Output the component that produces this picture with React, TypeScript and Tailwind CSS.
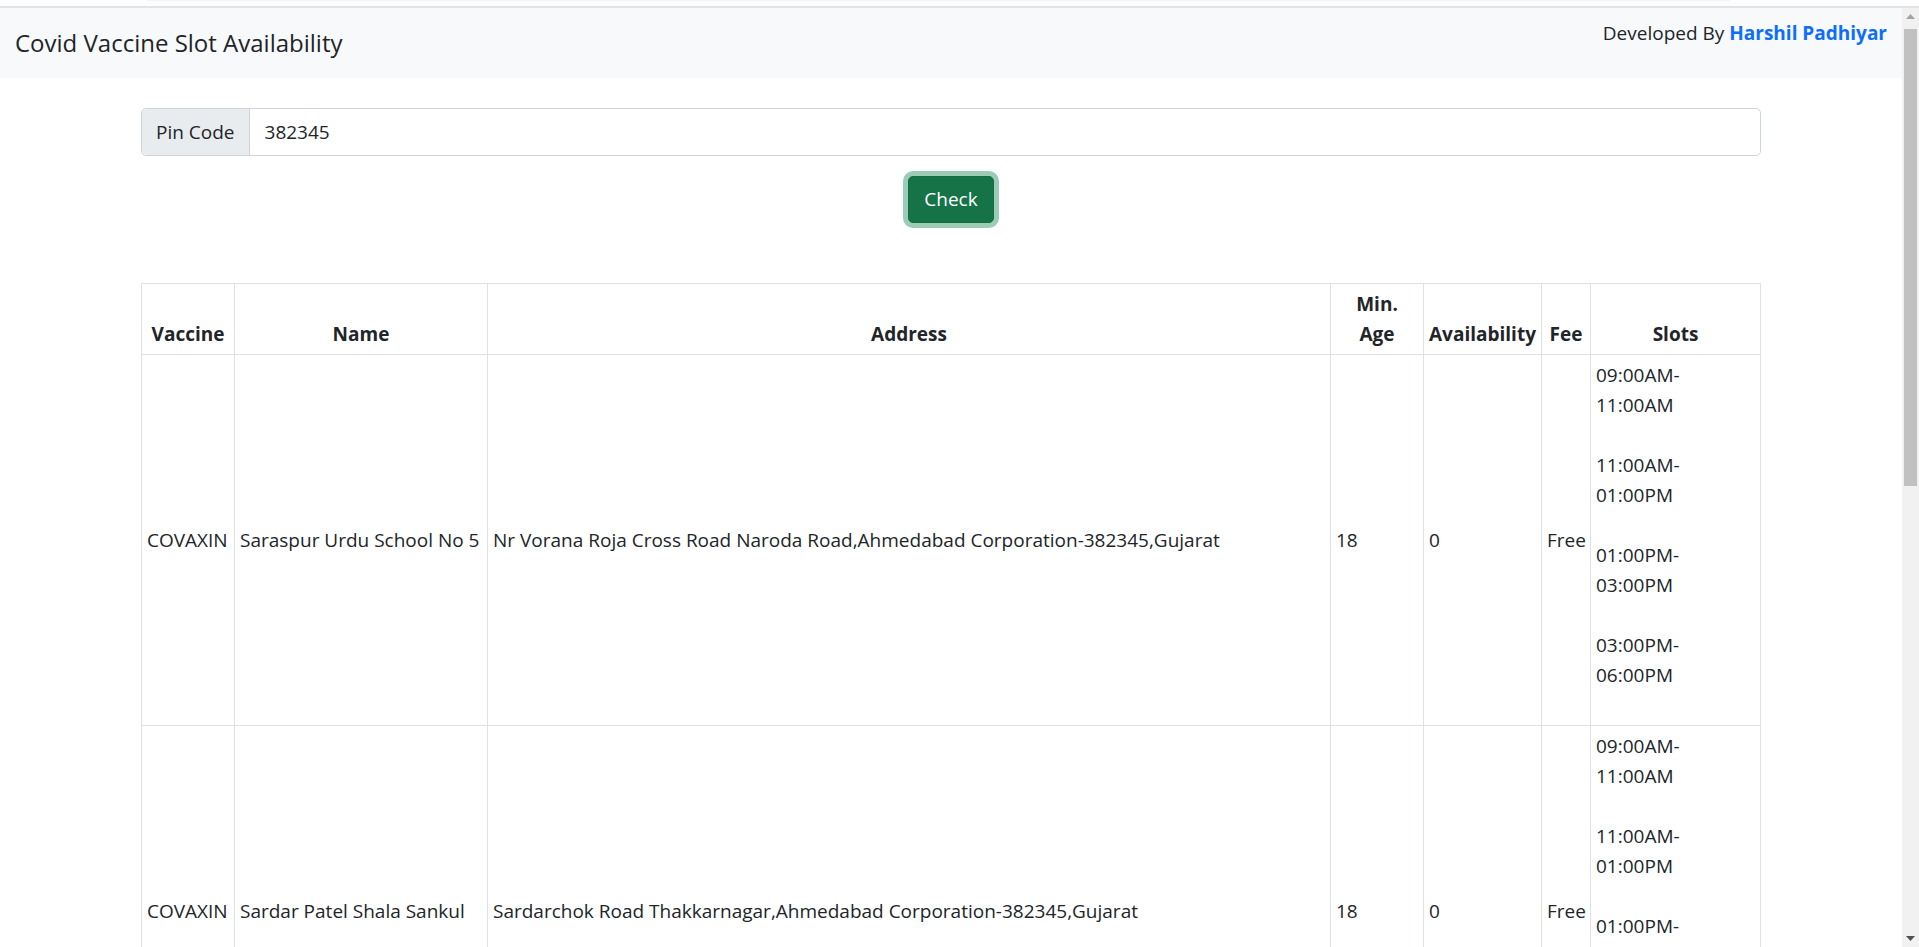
import React from "react";

type Center = {
  vaccine: string;
  name: string;
  address: string;
  minAge: number;
  available: number;
  fee: string;
  slots: [string, string][];
};

const slots: [string, string][] = [
  ["09:00AM-", "11:00AM"],
  ["11:00AM-", "01:00PM"],
  ["01:00PM-", "03:00PM"],
  ["03:00PM-", "06:00PM"],
];

const centers: Center[] = [
  {
    vaccine: "COVAXIN",
    name: "Saraspur Urdu School No 5",
    address: "Nr Vorana Roja Cross Road Naroda Road,Ahmedabad Corporation-382345,Gujarat",
    minAge: 18,
    available: 0,
    fee: "Free",
    slots,
  },
  {
    vaccine: "COVAXIN",
    name: "Sardar Patel Shala Sankul",
    address: "Sardarchok Road Thakkarnagar,Ahmedabad Corporation-382345,Gujarat",
    minAge: 18,
    available: 0,
    fee: "Free",
    slots,
  },
  {
    vaccine: "COVISHIELD",
    name: "Saraspur UHC",
    address: "Saraspur Road Near Vorana Pol,Ahmedabad Corporation-382345,Gujarat",
    minAge: 45,
    available: 0,
    fee: "Free",
    slots,
  },
  {
    vaccine: "COVISHIELD",
    name: "Thakkarbapanagar UHC",
    address: "Thakkarbapanagar Char Rasta,Ahmedabad Corporation-382345,Gujarat",
    minAge: 45,
    available: 0,
    fee: "Free",
    slots,
  },
];

const th = "border border-[#dee2e6] px-[5px] py-[5px] align-bottom text-center font-bold";
const td = "border border-[#dee2e6] px-[5px] py-[5px] align-middle text-left";

function Scrollbar() {
  return (
    <div className="sticky top-0 flex h-[939px] w-[17px] shrink-0 flex-col bg-[#f1f1f1]">
      <div className="flex h-[17px] items-center justify-center">
        <svg width="9" height="5" viewBox="0 0 9 5">
          <path d="M0 5 L4.5 0 L9 5 Z" fill="#a3a3a3" />
        </svg>
      </div>
      <div className="mx-[2px] mt-[4px] h-[457px] bg-[#c1c1c1]" />
      <div className="flex-1" />
      <div className="flex h-[17px] items-center justify-center">
        <svg width="9" height="5" viewBox="0 0 9 5">
          <path d="M0 0 L9 0 L4.5 5 Z" fill="#505050" />
        </svg>
      </div>
    </div>
  );
}

export default function App() {
  return (
    <div className="h-[947px] overflow-hidden bg-white font-['Open_Sans',sans-serif] text-[19px] leading-[30px] text-[#212529]">
      {/* top strip */}
      <div className="h-[8px]">
        <div className="ml-[147px] h-px w-[1583px] bg-[#f2f2f2]" />
        <div className="mt-[5px] h-[2px] bg-[#e2e3e5]" />
      </div>

      <div className="flex">
        <div className="min-w-0 flex-1">
          <nav className="flex h-[70px] items-center justify-between bg-[#f8f9fa] px-[15px]">
            <span className="text-[24px] leading-[37.5px]">Covid Vaccine Slot Availability</span>
            <p className="mb-[20px]">
              Developed By <a className="font-bold text-[#0d6efd]">Harshil Padhiyar</a>
            </p>
          </nav>

          <main className="mx-auto w-[1620px] pb-[40px]">
            <div className="mt-[30px] flex h-[47.5px] rounded-[5px] border border-[#ced4da]">
              <span className="flex items-center rounded-l-[5px] border-r border-[#ced4da] bg-[#e9ecef] px-[14px]">
                Pin Code
              </span>
              <input
                defaultValue="382345"
                className="flex-1 rounded-r-[5px] bg-white px-[15px] outline-none"
              />
            </div>

            <div className="mt-[20px] flex justify-center">
              <button className="h-[47.5px] rounded-[5px] border border-[#146c43] bg-[#157347] px-[15px] text-white shadow-[0_0_0_5px_rgba(60,153,110,0.5)]">
                Check
              </button>
            </div>

            <table className="mt-[60px] w-full table-fixed border-collapse border border-[#dee2e6]">
              <colgroup>
                <col className="w-[93px]" />
                <col className="w-[253px]" />
                <col />
                <col className="w-[93px]" />
                <col className="w-[118px]" />
                <col className="w-[49px]" />
                <col className="w-[170px]" />
              </colgroup>
              <thead>
                <tr>
                  <th className={th}>Vaccine</th>
                  <th className={th}>Name</th>
                  <th className={th}>Address</th>
                  <th className={th}>
                    Min.
                    <br />
                    Age
                  </th>
                  <th className={`${th} whitespace-nowrap`}>Availability</th>
                  <th className={th}>Fee</th>
                  <th className={th}>Slots</th>
                </tr>
              </thead>
              <tbody>
                {centers.map((c) => (
                  <tr key={c.name}>
                    <td className={`${td} whitespace-nowrap`}>{c.vaccine}</td>
                    <td className={`${td} whitespace-nowrap`}>{c.name}</td>
                    <td className={td}>{c.address}</td>
                    <td className={td}>{c.minAge}</td>
                    <td className={td}>{c.available}</td>
                    <td className={td}>{c.fee}</td>
                    <td className={td}>
                      {c.slots.map(([from, to]) => (
                        <div key={from} className="mb-[30px]">
                          {from}
                          <br />
                          {to}
                        </div>
                      ))}
                    </td>
                  </tr>
                ))}
              </tbody>
            </table>
          </main>
        </div>
        <Scrollbar />
      </div>
    </div>
  );
}
